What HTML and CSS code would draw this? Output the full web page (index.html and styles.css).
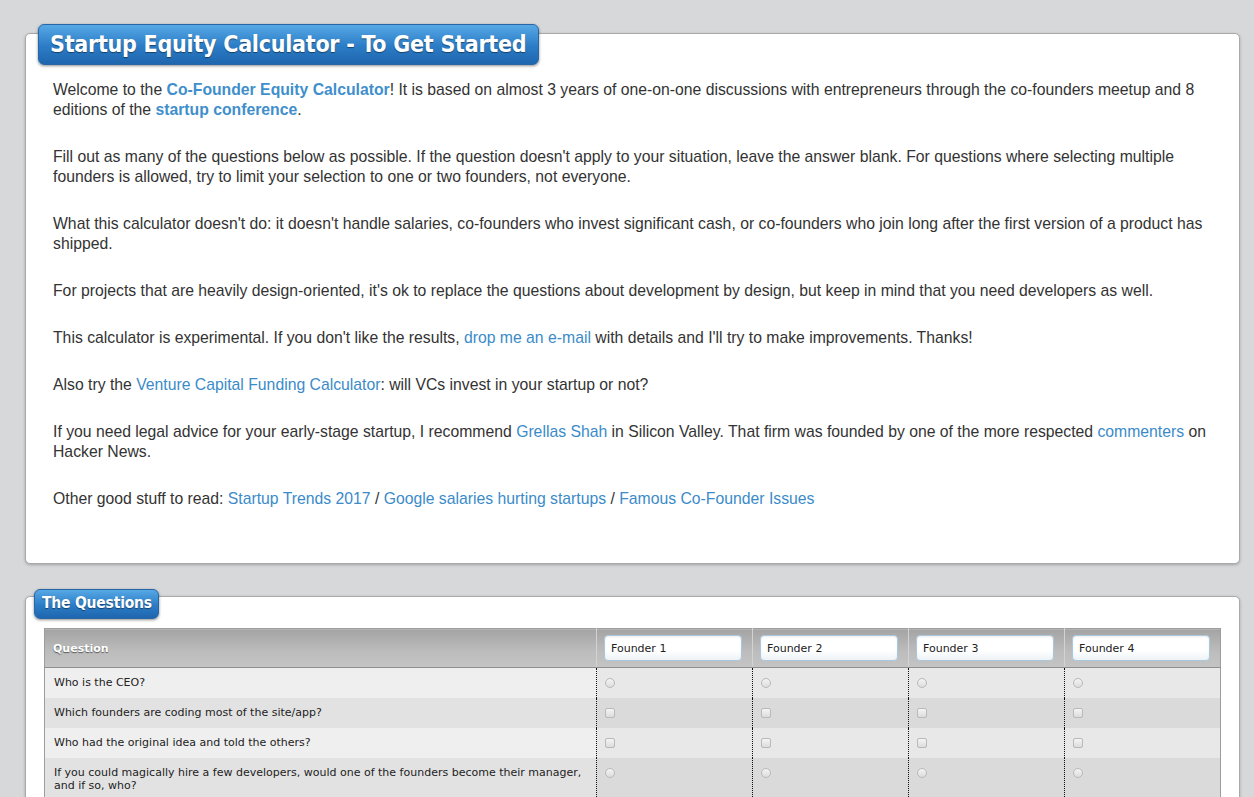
FILE: index.html
```html
<!DOCTYPE html>
<html lang="en">
<head>
<meta charset="UTF-8">
<meta name="viewport" content="width=device-width, initial-scale=1.0">
<title>Startup Equity Calculator</title>
<link rel="stylesheet" href="styles.css">
</head>
<body>
<div class="panel intro">
    <h1 class="tab tab-large">Startup Equity Calculator - To Get Started</h1>
    <div class="panel-body">
        <p>Welcome to the <a class="strong" href="#">Co-Founder Equity Calculator</a>! It is based on almost 3 years of one-on-one discussions with entrepreneurs through the co-founders meetup and 8 editions of the <a class="strong" href="#">startup conference</a>.</p>
        <p>Fill out as many of the questions below as possible. If the question doesn't apply to your situation, leave the answer blank. For questions where selecting multiple founders is allowed, try to limit your selection to one or two founders, not everyone.</p>
        <p>What this calculator doesn't do: it doesn't handle salaries, co-founders who invest significant cash, or co-founders who join long after the first version of a product has shipped.</p>
        <p>For projects that are heavily design-oriented, it's ok to replace the questions about development by design, but keep in mind that you need developers as well.</p>
        <p>This calculator is experimental. If you don't like the results, <a href="#">drop me an e-mail</a> with details and I'll try to make improvements. Thanks!</p>
        <p>Also try the <a href="#">Venture Capital Funding Calculator</a>: will VCs invest in your startup or not?</p>
        <p>If you need legal advice for your early-stage startup, I recommend <a href="#">Grellas Shah</a> in Silicon Valley. That firm was founded by one of the more respected <a href="#">commenters</a> on Hacker News.</p>
        <p>Other good stuff to read: <a href="#">Startup Trends 2017</a> / <a href="#">Google salaries hurting startups</a> / <a href="#">Famous Co-Founder Issues</a></p>
    </div>
</div>

<div class="panel questions">
    <h2 class="tab tab-small">The Questions</h2>
    <table class="grid">
        <colgroup>
            <col class="col-question">
            <col class="col-founder">
            <col class="col-founder">
            <col class="col-founder">
            <col class="col-founder">
        </colgroup>
        <thead>
            <tr>
                <th class="q-col">Question</th>
                <th><input type="text" class="founder-name" value="Founder 1"></th>
                <th><input type="text" class="founder-name" value="Founder 2"></th>
                <th><input type="text" class="founder-name" value="Founder 3"></th>
                <th><input type="text" class="founder-name" value="Founder 4"></th>
            </tr>
        </thead>
        <tbody>
            <tr>
                <td class="q-col">Who is the CEO?</td>
                <td><input type="radio" name="q1"></td>
                <td><input type="radio" name="q1"></td>
                <td><input type="radio" name="q1"></td>
                <td><input type="radio" name="q1"></td>
            </tr>
            <tr>
                <td class="q-col">Which founders are coding most of the site/app?</td>
                <td><input type="checkbox"></td>
                <td><input type="checkbox"></td>
                <td><input type="checkbox"></td>
                <td><input type="checkbox"></td>
            </tr>
            <tr>
                <td class="q-col">Who had the original idea and told the others?</td>
                <td><input type="checkbox"></td>
                <td><input type="checkbox"></td>
                <td><input type="checkbox"></td>
                <td><input type="checkbox"></td>
            </tr>
            <tr>
                <td class="q-col">If you could magically hire a few developers, would one of the founders become their manager, and if so, who?</td>
                <td><input type="radio" name="q4"></td>
                <td><input type="radio" name="q4"></td>
                <td><input type="radio" name="q4"></td>
                <td><input type="radio" name="q4"></td>
            </tr>
            <tr>
                <td class="q-col">Which founders are working full-time on the project?</td>
                <td><input type="checkbox"></td>
                <td><input type="checkbox"></td>
                <td><input type="checkbox"></td>
                <td><input type="checkbox"></td>
            </tr>
        </tbody>
    </table>
</div>
</body>
</html>
```

FILE: styles.css
```css
body {
    margin: 0;
    padding: 33px 14px 40px 25px;
    background-color: #d7d8da;
    font-family: "Liberation Sans", Arial, sans-serif;
}
a {
    color: #3b8bc9;
    text-decoration: none;
}
a.strong {
    font-weight: bold;
    color: #3f8fcc;
}

/* white boxes with a blue tab on top */
.panel {
    background-color: #fff;
    border: 1px solid #a9a9a9;
    border-radius: 5px;
    box-shadow: 0 1px 3px rgba(0, 0, 0, 0.25);
}
.questions {
    margin-top: 32px;
}
.tab {
    display: block;
    color: #fff;
    font-family: "DejaVu Sans Condensed", "DejaVu Sans", sans-serif;
    font-weight: bold;
    white-space: nowrap;
    background: linear-gradient(#56a8e5, #2b7cc6 55%, #1e66ae);
    border: 1px solid #2866a6;
    border-radius: 6px;
    box-shadow: 0 1px 3px rgba(0, 0, 0, 0.45);
    text-shadow: 0 1px 1px rgba(0, 0, 0, 0.45);
    box-sizing: border-box;
}
.tab-large {
    margin: -10px 0 0 12px;
    width: 501px;
    height: 41px;
    line-height: 38px;
    padding-left: 11px;
    font-size: 23px;
    letter-spacing: -0.25px;
}
.tab-small {
    margin: -8px 0 0 8px;
    width: 125px;
    height: 30px;
    line-height: 27px;
    padding-left: 7px;
    font-size: 15.5px;
    letter-spacing: -0.2px;
}
.panel-body {
    padding: 15px 27px 54px 27px;
    color: #333;
    font-size: 15.75px;
    line-height: 20px;
}
.panel-body p {
    margin: 0 0 27px;
}
.panel-body p:last-child {
    margin-bottom: 0;
}

/* question grid */
.grid {
    table-layout: fixed;
    width: 1177px;
    margin: 9px 0 0 18px;
    border-collapse: collapse;
    border: 1px solid #9d9d9d;
    font-family: "DejaVu Sans", sans-serif;
    font-size: 11px;
    color: #222;
}
.col-question {
    width: 552px;
}
.col-founder {
    width: 156px;
}
.grid th {
    height: 39px;
    padding: 0 7px;
    background: linear-gradient(#a4a4a4, #bdbdbd 60%, #c4c4c4);
    border-bottom: 1px solid #8f8f8f;
    border-left: 1px solid #d3d3d3;
    text-align: left;
    box-sizing: border-box;
}
.grid th.q-col {
    border-left: none;
    padding: 0 8px;
    color: #fff;
    text-shadow: 0 1px 1px rgba(0, 0, 0, 0.55);
}
.grid td {
    padding: 0 7px;
    background-color: #e8e8e8;
    border-left: 1px dotted #111;
    vertical-align: top;
}
.grid td.q-col {
    border-left: none;
    background-color: #efefef;
    padding: 8px 9px 9px;
    line-height: 13px;
}
.grid tbody tr:nth-child(even) td {
    background-color: #dadada;
}
.grid tbody tr:nth-child(even) td.q-col {
    background-color: #e2e2e2;
}
.founder-name {
    width: 138px;
    height: 26px;
    box-sizing: border-box;
    padding: 0 6px;
    border: 1px solid #a9c8dd;
    border-radius: 4px;
    background: linear-gradient(#fff, #fff 60%, #eef3f6);
    box-shadow: inset 0 1px 2px rgba(0, 0, 0, 0.08);
    font-family: "DejaVu Sans", sans-serif;
    font-size: 11px;
    color: #222;
}
.grid input[type="radio"],
.grid input[type="checkbox"] {
    appearance: none;
    -webkit-appearance: none;
    display: block;
    width: 10px;
    height: 10px;
    margin: 10px 0 0 1px;
    border: 1px solid #b9b9b9;
    background: linear-gradient(#f4f4f4, #dcdcdc);
}
.grid input[type="radio"] {
    border-radius: 50%;
}
.grid input[type="checkbox"] {
    border-radius: 2px;
}
```
